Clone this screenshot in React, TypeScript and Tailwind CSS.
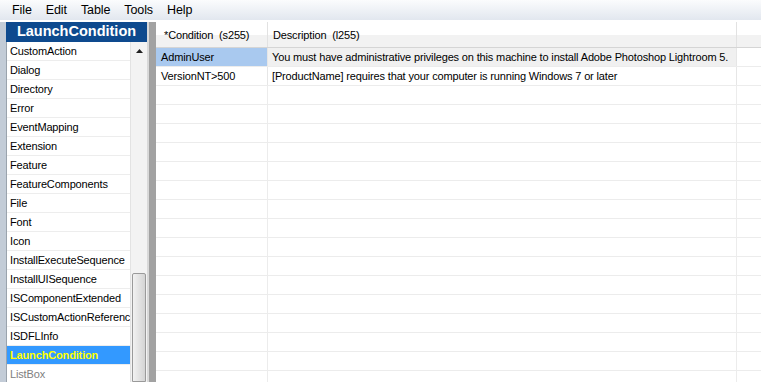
import React from "react";

const tables = [
  "CustomAction",
  "Dialog",
  "Directory",
  "Error",
  "EventMapping",
  "Extension",
  "Feature",
  "FeatureComponents",
  "File",
  "Font",
  "Icon",
  "InstallExecuteSequence",
  "InstallUISequence",
  "ISComponentExtended",
  "ISCustomActionReference",
  "ISDFLInfo",
  "LaunchCondition",
  "ListBox",
];

const rows = [
  {
    condition: "AdminUser",
    description:
      "You must have administrative privileges on this machine to install Adobe Photoshop Lightroom 5.",
  },
  {
    condition: "VersionNT>500",
    description: "[ProductName] requires that your computer is running Windows 7 or later",
  },
];

function MenuBar() {
  return (
    <div className="flex h-[22px] shrink-0 items-center border-b-2 border-white bg-gradient-to-b from-[#fbfcfd] to-[#e2e7ef] pl-[12px] text-[12.5px] tracking-[-0.1px] text-black">
      {["File", "Edit", "Table", "Tools", "Help"].map((m) => (
        <span key={m} className="mr-[14px] leading-none">
          {m}
        </span>
      ))}
    </div>
  );
}

function TableList() {
  return (
    <div className="flex w-[141px] shrink-0 flex-col">
      <div className="flex h-[20px] shrink-0 items-center justify-center bg-[#0e4a8e] text-[14.5px] font-bold tracking-[0px] text-white">
        LaunchCondition
      </div>
      <div className="flex min-h-0 flex-1">
        <div className="w-[124px] overflow-hidden border-l border-[#9aa3ad] bg-white">
          {tables.map((t) => {
            const selected = t === "LaunchCondition";
            const dim = t === "ListBox";
            return (
              <div
                key={t}
                className={`flex h-[19px] items-center overflow-hidden whitespace-nowrap border-b border-[#ededed] pl-[3px] ${
                  selected
                    ? "bg-[#3399ff] font-bold text-[#ffff00]"
                    : dim
                      ? "text-[#808080]"
                      : "text-black"
                }`}
              >
                {t}
              </div>
            );
          })}
        </div>
        <div className="flex w-[17px] shrink-0 flex-col border-l border-[#e3e3e3] bg-[#f3f3f3]">
          <div className="flex h-[17px] items-center justify-center">
            <svg width="7" height="4" viewBox="0 0 7 4">
              <path d="M3.5 0 L7 4 L0 4 Z" fill="#202020" />
            </svg>
          </div>
          <div className="h-[214px]" />
          <div className="mx-[1px] flex-1 rounded-t-[2px] border border-[#9a9a9a] bg-gradient-to-r from-[#f2f2f2] to-[#d4d4d4]" />
        </div>
      </div>
    </div>
  );
}

function Grid() {
  const filler = Array.from({ length: 16 });
  return (
    <div className="flex min-w-0 flex-1 flex-col overflow-hidden bg-white">
      <div className="flex h-[26px] shrink-0 border-b border-[#d5d5d5] bg-[linear-gradient(#ffffff_0%,#ffffff_50%,#f2f2f2_50%,#f2f2f2_100%)]">
        <div className="flex w-[112px] shrink-0 items-center whitespace-pre border-r border-[#e2e2e2] pl-[8px] pt-[2px]">
          *Condition  (s255)
        </div>
        <div className="flex w-[469px] shrink-0 items-center whitespace-pre border-r border-[#e2e2e2] pl-[5px] pt-[2px]">
          Description  (l255)
        </div>
        <div className="flex-1" />
      </div>
      {rows.map((r, i) => (
        <div key={r.condition} className="flex h-[19px] shrink-0 border-b border-[#ececec]">
          <div
            className={`flex w-[112px] shrink-0 items-center whitespace-nowrap border-r border-[#e6e6e6] pl-[5px] ${
              i === 0 ? "bg-[#a9c9ef]" : ""
            }`}
          >
            {r.condition}
          </div>
          <div
            className={`flex w-[469px] shrink-0 items-center overflow-hidden whitespace-nowrap border-r border-[#e6e6e6] pl-[4px] ${
              i === 0 ? "bg-[#f0f0f0]" : ""
            }`}
          >
            {r.description}
          </div>
          <div className="flex-1" />
        </div>
      ))}
      {filler.map((_, i) => (
        <div key={i} className="flex h-[19px] shrink-0 border-b border-[#ececec]">
          <div className="w-[112px] shrink-0 border-r border-[#ececec]" />
          <div className="w-[469px] shrink-0 border-r border-[#ececec]" />
          <div className="flex-1" />
        </div>
      ))}
    </div>
  );
}

export default function App() {
  return (
    <div className="flex h-[382px] w-[761px] flex-col overflow-hidden bg-white font-['Liberation_Sans',Arial,sans-serif] text-[11px] tracking-[-0.15px] text-black">
      <MenuBar />
      <div className="flex min-h-0 flex-1">
        <div className="w-[6px] shrink-0 bg-[#c3ccd7]" />
        <TableList />
        <div className="w-[2px] shrink-0 bg-[#d9d9d9]" />
        <div className="w-[7px] shrink-0 bg-[#a2a2a2]" />
        <Grid />
      </div>
    </div>
  );
}
